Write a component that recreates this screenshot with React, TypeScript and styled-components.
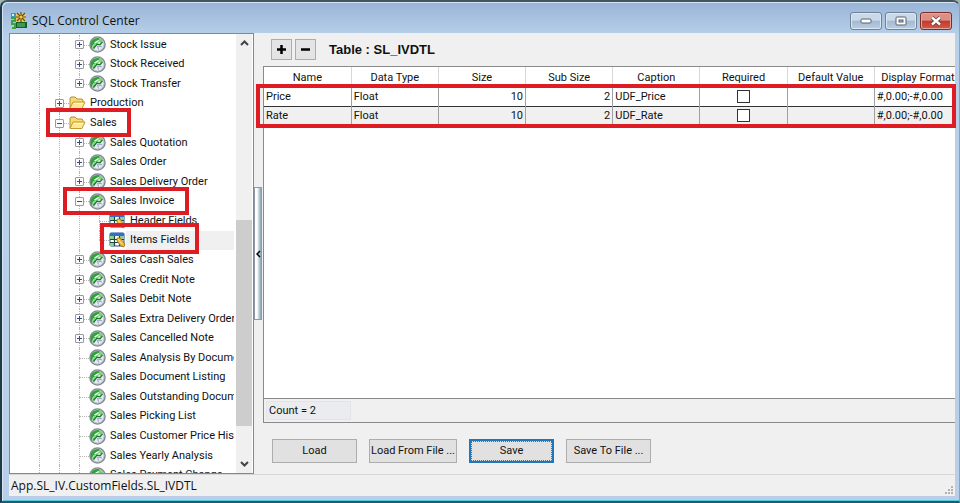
import React from "react";
import styled, { createGlobalStyle, css } from "styled-components";

const GlobalStyle = createGlobalStyle`
  *, *::before, *::after { box-sizing: border-box; }
  body {
    margin: 0;
    background: #9fb5b4;
    color: #111;
    font: 11px/16px Roboto, "Liberation Sans", sans-serif;
  }
  button, input, table { font: inherit; color: inherit; }
  button { margin: 0; padding: 0; }
`;

const Window = styled.div`
  display: flex;
  flex-direction: column;
  height: 100vh;
  padding: 0 4px 5px 7px;
  background: linear-gradient(to bottom, #98b4d6 0, #b8d0ea 34px, #b9cfe9 100%);
  border: 2px solid #1e3a48;
  border-right: 1px solid #8ba3b8;
  border-top-color: #44565f;
  border-bottom-color: #1b5e72;
  border-radius: 7px 7px 0 0;
  box-shadow: inset 1px 1px 0 #d4e4f4, inset 0 -1px 0 #5fc7dc;
`;

const TitleBar = styled.header`
  display: flex;
  align-items: center;
  gap: 5px;
  height: 31px;
  flex: none;
  padding: 6px 3px 0 2px;
`;

const Title = styled.h1`
  flex: 1;
  margin: 0;
  font: 12px/18px "Open Sans", "Noto Sans", sans-serif;
`;

const CaptionButtons = styled.div`
  display: flex;
  gap: 3px;
  align-self: flex-start;
  padding-top: 4px;
`;

const CaptionButton = styled.button<{ $close?: boolean }>`
  display: grid;
  place-items: center;
  width: 32px;
  height: 18px;
  border: 1px solid #6f8195;
  border-radius: 3px;
  background: linear-gradient(#c9d9ea 0 45%, #a5bad2 50%, #b9cde3);
  box-shadow: inset 0 0 0 1px #dbe7f3;
  ${(p) =>
    p.$close &&
    css`
      border-color: #7a2c28;
      background: linear-gradient(#dd8f83 0 45%, #c4392b 50%, #cf5c48);
      box-shadow: inset 0 0 0 1px #e5a79d;
    `}
`;

const Client = styled.main`
  display: flex;
  flex: 1;
  min-height: 0;
  background: #f0f0f0;
`;

const TreePanel = styled.nav`
  display: flex;
  flex: none;
  width: 245px;
  padding-right: 1px;
  background: #fff;
  border: 1px solid #828790;
`;

const TreeScroll = styled.div`
  flex: 1;
  min-width: 0;
  overflow: hidden;
  padding-right: 2px;
`;

const TreeList = styled.ul`
  display: flex;
  flex-direction: column;
  height: calc(100% + 12px);
  margin: 0;
  padding: 1px 0 0;
  list-style: none;
`;

const TreeRow = styled.li`
  position: relative;
  display: flex;
  flex: 1 1 19px;
  min-height: 0;
  padding-left: 19px;
`;

type GuideKind = "line" | "tee" | "last";

const Guide = styled.span<{ $kind: GuideKind }>`
  display: grid;
  place-items: center;
  flex: none;
  width: 20px;
  position: relative;
  &::before {
    content: "";
    position: absolute;
    left: 10px;
    top: 0;
    bottom: ${(p) => (p.$kind === "last" ? "50%" : "0")};
    border-left: 1px dotted #b4b4b4;
  }
  &::after {
    content: "";
    position: absolute;
    left: 10px;
    right: 0;
    top: 50%;
    border-top: ${(p) => (p.$kind === "line" ? "0" : "1px dotted #b4b4b4")};
  }
`;

const Expander = styled.button`
  position: relative;
  z-index: 1;
  display: grid;
  width: 9px;
  height: 9px;
  border: 1px solid #9a9a9a;
  border-radius: 1px;
  background: #fafafa;
  svg { display: block; }
`;

const NodeIcon = styled.span`
  display: grid;
  place-items: center;
  flex: none;
  width: 17px;
`;

const NodeLabel = styled.a<{ $selected?: boolean }>`
  display: flex;
  align-items: center;
  flex: 1;
  min-width: 0;
  padding-left: 4px;
  overflow: hidden;
  white-space: nowrap;
  color: inherit;
  text-decoration: none;
  background: ${(p) => (p.$selected ? "#f0f0f0" : "transparent")};
`;

const Marker = styled.span<{ $left: number; $width: number; $up: number; $down: number }>`
  position: absolute;
  z-index: 3;
  left: ${(p) => p.$left}px;
  width: ${(p) => p.$width}px;
  top: ${(p) => -p.$up}px;
  bottom: ${(p) => -p.$down}px;
  border: 4px solid #dd1c24;
  pointer-events: none;
`;

const ScrollTrack = styled.div`
  display: flex;
  flex-direction: column;
  flex: none;
  width: 16px;
  background: #f0f0f0;
`;

const ScrollArrow = styled.button`
  display: grid;
  place-items: center;
  height: 18px;
  border: 0;
  background: transparent;
`;

const ScrollSpace = styled.div<{ $share: number }>`
  flex: ${(p) => p.$share};
`;

const ScrollThumb = styled.div`
  flex: 207;
  background: #cdcdcd;
`;

const Splitter = styled.div`
  display: flex;
  align-items: center;
  flex: none;
  width: 9px;
`;

const SplitHandle = styled.button`
  display: grid;
  place-items: center;
  width: 8px;
  height: 133px;
  border: 1px solid #8d99a5;
  background: linear-gradient(to right, #fff 0 35%, #dde6ec 50%, #86a3b5);
`;

const Content = styled.section`
  display: flex;
  flex: 1;
  flex-direction: column;
  min-width: 0;
`;

const Toolbar = styled.div`
  display: flex;
  align-items: center;
  gap: 3px;
  height: 33px;
  flex: none;
  padding: 0 8px;
`;

const ToolButton = styled.button`
  display: grid;
  place-items: center;
  width: 21px;
  height: 21px;
  border: 1px solid #adadad;
  background: #e4e4e4;
`;

const TableTitle = styled.h2`
  margin: 0 0 0 10px;
  font: bold 13px/18px "Liberation Sans", Arial, sans-serif;
`;

const GridPanel = styled.div`
  position: relative;
  display: flex;
  flex: 1;
  flex-direction: column;
  min-height: 0;
  border: 1px solid #8a8a8a;
  border-right: 0;
  background: #fff;
`;

const GridViewport = styled.div`
  flex: 1;
  min-height: 0;
  overflow: hidden;
`;

const DataTable = styled.table`
  width: calc(100% + 7px);
  table-layout: fixed;
  border-collapse: collapse;
`;

const HeadCell = styled.th`
  height: 20px;
  padding: 2px 0 0;
  font-weight: 400;
  text-align: center;
  white-space: nowrap;
  border-right: 1px solid #d8d8d8;
  border-bottom: 1px solid #8a8a8a;
`;

const DataRow = styled.tr<{ $shaded?: boolean }>`
  background: ${(p) => (p.$shaded ? "#f0f0f0" : "#fff")};
  border-bottom: 1px solid #333;
`;

const Cell = styled.td<{ $align?: "right" | "center" }>`
  height: 19px;
  padding: 0 2px;
  text-align: ${(p) => p.$align ?? "left"};
  white-space: nowrap;
  border-right: 1px solid #a0a0a0;
`;

const Check = styled.input`
  appearance: none;
  display: block;
  width: 13px;
  height: 13px;
  margin: 0 auto;
  border: 1px solid #333;
  background: #fff;
`;

const TableFooter = styled.div`
  flex: none;
  display: flex;
  height: 24px;
  padding: 2px;
  border-top: 1px solid #8a8a8a;
  background: #f0f0f0;
`;

const Count = styled.output`
  width: 85px;
  padding-left: 2px;
  line-height: 18px;
  background: #eaecef;
  border: 1px solid #e2e4e7;
`;

const Actions = styled.div`
  display: flex;
  gap: 12px;
  flex: none;
  padding: 16px 9px 11px;
`;

const ActionButton = styled.button<{ $focused?: boolean }>`
  min-width: 85px;
  height: 24px;
  padding: 0 1px;
  border: 1px solid #adadad;
  background: #e1e1e1;
  white-space: nowrap;
  ${(p) =>
    p.$focused &&
    css`
      border: 2px solid #2277b8;
      outline: 1px dotted #2277b8;
      outline-offset: -3px;
    `}
`;

const StatusBar = styled.footer`
  display: flex;
  align-items: center;
  justify-content: space-between;
  flex: none;
  height: 22px;
  padding-left: 2px;
  border-top: 1px solid #d7d7d7;
  background: #f0f0f0;
  font: 12px/18px "Open Sans", "Noto Sans", sans-serif;
`;

const GripIcon = styled.svg`
  align-self: flex-end;
  margin: 2px;
`;

const AppIcon = () => (
  <svg width="16" height="17" viewBox="0 0 16 17" aria-hidden="true">
    <path d="M0 1h5v4H0z" fill="#3a9db5" />
    <path d="M1 2h2v2H1z" fill="#d8f0f4" />
    <path d="M0 6h4v3H1v3h3v4H1" fill="none" stroke="#3fa13f" strokeWidth="2" />
    <path d="M5 1h10v9H5z" fill="#e9c95c" />
    <path d="M6 1l8 8M14 1L6 9M10 0v10M5 5h10" stroke="#6a4a1c" strokeWidth="1.200" />
    <circle cx="10" cy="5" r="1.500" fill="#f3d23a" />
    <path d="M5 10h11v6H5z" fill="#14602c" />
    <path d="M6 12h8M6 14h8" stroke="#6fcf72" />
  </svg>
);

const ModuleIcon = () => (
  <svg width="17" height="17" viewBox="0 0 17 17" aria-hidden="true">
    <circle cx="8.500" cy="8.500" r="7.500" fill="#e6ebf3" stroke="#868b94" strokeWidth="1.600" />
    <circle cx="8.500" cy="8.500" r="6.400" fill="none" stroke="#bcc2cc" />
    <path d="M2 11.500C0 6 4 1.500 10 2l1 1.500L6 8l-2 .5L3 12z" fill="#2ca238" />
    <path d="M11 2.500l3 2.500-3 3.500-3-1-3 5-2 .5 2-5z" fill="#7ed07a" />
    <path d="M5.500 7l4-2.500M6 9.500l5-3" stroke="#fff" strokeWidth="1.200" />
    <path d="M4.500 12.500L8 8l3 .8 2.500-3" fill="none" stroke="#197b2a" strokeWidth="1.300" />
    <path d="M8.500 10l1 3.500M8.500 10l4.500.8" stroke="#8fa3c2" strokeWidth="1" />
  </svg>
);

const FolderIcon = () => (
  <svg width="17" height="14" viewBox="0 0 17 14" aria-hidden="true">
    <path d="M1 12V2l1-1h4l2 2h5l1 1v3" fill="#f6d978" stroke="#b98d2c" />
    <path d="M1 12.500L4 6h12l-3 6.500z" fill="#fde993" stroke="#c79a30" strokeLinejoin="round" />
    <path d="M5 7.500h9" stroke="#fff8cf" />
  </svg>
);

const FieldsIcon = () => (
  <svg width="17" height="16" viewBox="0 0 17 16" aria-hidden="true">
    <rect x="1" y="1" width="14" height="13" rx="1" fill="#fff" stroke="#1f4f9c" />
    <path d="M1 1h14v3H1z" fill="#2e6fd0" />
    <path d="M1 4h5v3H1zM1 11h5v3H1zM11 4h4v3h-4z" fill="#8fd08d" />
    <path d="M1 7.500h14M1 10.500h14M5.500 4v10M10.500 4v10" stroke="#1c4a3a" strokeWidth="1.200" />
    <path d="M8 6l3 0 5 6-1 3-3-1-4-5z" fill="#f2b632" stroke="#a86f14" strokeWidth=".8" />
    <path d="M9 7l4 5" stroke="#ffe69a" />
  </svg>
);

const Chevron = ({ d, w, h }: { d: string; w: number; h: number }) => (
  <svg width={w} height={h} viewBox={`0 0 ${w} ${h}`} aria-hidden="true">
    <path d={d} fill="none" stroke="#444" strokeWidth="2" />
  </svg>
);

interface TreeNode {
  label: string;
  level: 0 | 1 | 2;
  state?: "open" | "closed";
  selected?: boolean;
  last?: boolean;
  marker?: { left: number; width: number; up: number; down: number };
}

const leaf = (label: string, state?: "open" | "closed"): TreeNode => ({ label, level: 1, state });

const nodes: TreeNode[] = [
  leaf("Stock Issue", "closed"),
  leaf("Stock Received", "closed"),
  { ...leaf("Stock Transfer", "closed"), last: true },
  { label: "Production", level: 0, state: "closed" },
  { label: "Sales", level: 0, state: "open", marker: { left: 36, width: 85, up: 5, down: 4 } },
  leaf("Sales Quotation", "closed"),
  leaf("Sales Order", "closed"),
  leaf("Sales Delivery Order", "closed"),
  { ...leaf("Sales Invoice", "open"), marker: { left: 53, width: 126, up: 5, down: 4 } },
  { label: "Header Fields", level: 2 },
  { label: "Items Fields", level: 2, last: true, selected: true, marker: { left: 90, width: 99, up: 8, down: 4 } },
  leaf("Sales Cash Sales", "closed"),
  leaf("Sales Credit Note", "closed"),
  leaf("Sales Debit Note", "closed"),
  leaf("Sales Extra Delivery Order", "closed"),
  leaf("Sales Cancelled Note", "closed"),
  leaf("Sales Analysis By Document"),
  leaf("Sales Document Listing"),
  leaf("Sales Outstanding Document"),
  leaf("Sales Picking List"),
  leaf("Sales Customer Price History"),
  leaf("Sales Yearly Analysis"),
  leaf("Sales Payment Change"),
];

const TreeItem = ({ node }: { node: TreeNode }) => {
  const ancestors = node.level + 1;
  return (
    <TreeRow>
      {Array.from({ length: ancestors }, (_, i) => (
        <Guide key={i} $kind="line" />
      ))}
      <Guide $kind={node.last ? "last" : "tee"}>
        {node.state && (
          <Expander aria-label={`${node.state === "open" ? "Collapse" : "Expand"} ${node.label}`}>
            <svg width="7" height="7" viewBox="0 0 7 7" aria-hidden="true">
              <path d={node.state === "open" ? "M1 3.500h5" : "M1 3.500h5M3.500 1v5"} stroke="#35507e" />
            </svg>
          </Expander>
        )}
      </Guide>
      <NodeIcon>
        {node.level === 0 ? <FolderIcon /> : node.level === 1 ? <ModuleIcon /> : <FieldsIcon />}
      </NodeIcon>
      <NodeLabel href="#" $selected={node.selected}>
        {node.label}
      </NodeLabel>
      {node.marker && (
        <Marker
          $left={node.marker.left}
          $width={node.marker.width}
          $up={node.marker.up}
          $down={node.marker.down}
        />
      )}
    </TreeRow>
  );
};

const TableMarker = styled.span`
  position: absolute;
  z-index: 3;
  left: -8px;
  right: -1px;
  top: 17px;
  height: 44px;
  border: 4px solid #dd1c24;
  pointer-events: none;
`;

const columns = ["Name", "Data Type", "Size", "Sub Size", "Caption", "Required", "Default Value", "Display Format"];

const fields = [
  { name: "Price", type: "Float", size: 10, sub: 2, caption: "UDF_Price", format: "#,0.00;-#,0.00" },
  { name: "Rate", type: "Float", size: 10, sub: 2, caption: "UDF_Rate", format: "#,0.00;-#,0.00" },
];

export default function App() {
  return (
    <>
      <GlobalStyle />
      <Window>
        <TitleBar>
          <AppIcon />
          <Title>SQL Control Center</Title>
          <CaptionButtons>
            <CaptionButton aria-label="Minimize">
              <svg width="12" height="6" viewBox="0 0 12 6">
                <rect x="1" y="1" width="10" height="4" rx="1" fill="#fff" stroke="#56616e" />
              </svg>
            </CaptionButton>
            <CaptionButton aria-label="Maximize">
              <svg width="12" height="10" viewBox="0 0 12 10">
                <rect x="1" y="1" width="10" height="8" rx="1" fill="#fff" stroke="#56616e" />
                <rect x="4" y="4" width="4" height="2" fill="#a9bdd3" stroke="#56616e" />
              </svg>
            </CaptionButton>
            <CaptionButton $close aria-label="Close">
              <svg width="12" height="10" viewBox="0 0 12 10">
                <path d="M2 1.500l8 7M10 1.500l-8 7" stroke="#5b3a3c" strokeWidth="4" />
                <path d="M2 1.500l8 7M10 1.500l-8 7" stroke="#fff" strokeWidth="2.400" />
              </svg>
            </CaptionButton>
          </CaptionButtons>
        </TitleBar>

        <Client>
          <TreePanel aria-label="Modules">
            <TreeScroll>
              <TreeList>
                {nodes.map((node) => (
                  <TreeItem key={node.label} node={node} />
                ))}
              </TreeList>
            </TreeScroll>
            <ScrollTrack>
              <ScrollArrow aria-label="Scroll up">
                <Chevron w={9} h={6} d="M1 5l3.500-3.500L8 5" />
              </ScrollArrow>
              <ScrollSpace $share={169} />
              <ScrollThumb />
              <ScrollSpace $share={29} />
              <ScrollArrow aria-label="Scroll down">
                <Chevron w={9} h={6} d="M1 1l3.500 3.500L8 1" />
              </ScrollArrow>
            </ScrollTrack>
          </TreePanel>

          <Splitter>
            <SplitHandle aria-label="Collapse panel">
              <svg width="5" height="8" viewBox="0 0 5 8">
                <path d="M4 1L1 4l3 3" fill="none" stroke="#000" strokeWidth="1.500" />
              </svg>
            </SplitHandle>
          </Splitter>

          <Content>
            <Toolbar>
              <ToolButton aria-label="Add field">
                <svg width="11" height="11" viewBox="0 0 11 11">
                  <path d="M1 5.500h9M5.500 1v9" stroke="#000" strokeWidth="2.500" />
                </svg>
              </ToolButton>
              <ToolButton aria-label="Remove field">
                <svg width="11" height="11" viewBox="0 0 11 11">
                  <path d="M1 5.500h9" stroke="#000" strokeWidth="2.500" />
                </svg>
              </ToolButton>
              <TableTitle>Table : SL_IVDTL</TableTitle>
            </Toolbar>

            <GridPanel>
              <GridViewport>
                <DataTable>
                  <thead>
                    <tr>
                      {columns.map((c) => (
                        <HeadCell key={c} scope="col">
                          {c}
                        </HeadCell>
                      ))}
                    </tr>
                  </thead>
                  <tbody>
                    {fields.map((f, i) => (
                      <DataRow key={f.name} $shaded={i % 2 === 1}>
                        <Cell>{f.name}</Cell>
                        <Cell>{f.type}</Cell>
                        <Cell $align="right">{f.size}</Cell>
                        <Cell $align="right">{f.sub}</Cell>
                        <Cell>{f.caption}</Cell>
                        <Cell $align="center">
                          <Check type="checkbox" aria-label={`${f.name} required`} />
                        </Cell>
                        <Cell />
                        <Cell>{f.format}</Cell>
                      </DataRow>
                    ))}
                  </tbody>
                </DataTable>
              </GridViewport>
              <TableFooter>
                <Count>Count = 2</Count>
              </TableFooter>
              <TableMarker />
            </GridPanel>

            <Actions>
              <ActionButton>Load</ActionButton>
              <ActionButton>Load From File ...</ActionButton>
              <ActionButton $focused>Save</ActionButton>
              <ActionButton>Save To File ...</ActionButton>
            </Actions>
          </Content>
        </Client>

        <StatusBar>
          <span>App.SL_IV.CustomFields.SL_IVDTL</span>
          <GripIcon width="9" height="9" viewBox="0 0 9 9" aria-hidden="true">
            <path
              d="M7 1h2v2h-2zM4 4h2v2h-2zM7 4h2v2h-2zM1 7h2v2h-2zM4 7h2v2h-2zM7 7h2v2h-2z"
              fill="#b3b3b3"
            />
          </GripIcon>
        </StatusBar>
      </Window>
    </>
  );
}
